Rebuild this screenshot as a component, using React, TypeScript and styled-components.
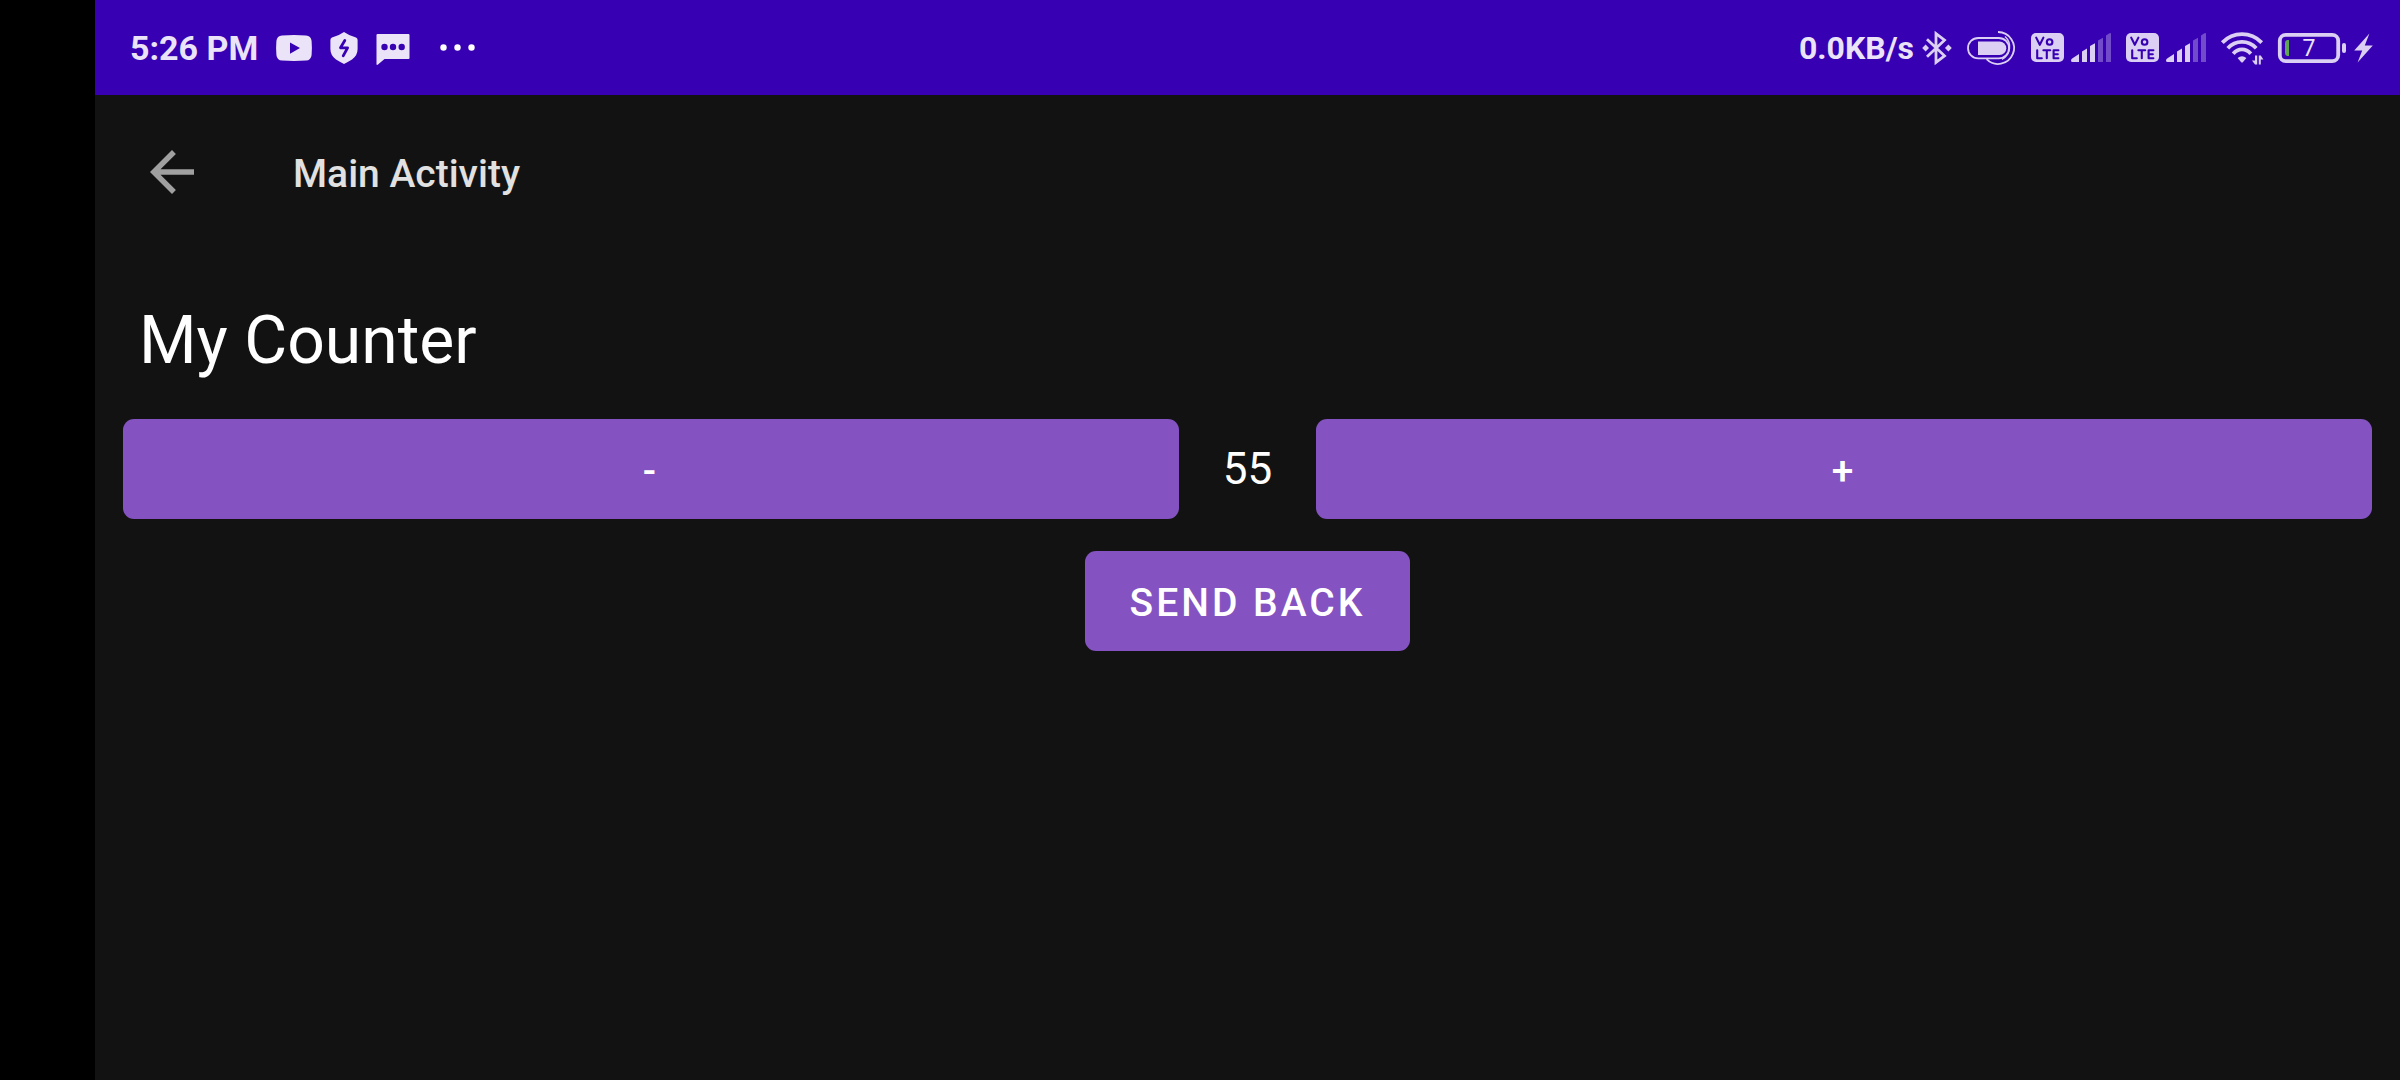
import React, { useState } from "react";
import styled, { createGlobalStyle } from "styled-components";

const GlobalStyle = createGlobalStyle`
  * { box-sizing: border-box; }
  html, body { margin: 0; }
  body {
    background: #121212;
    font-family: Roboto, "Noto Sans", sans-serif;
  }
`;

const Screen = styled.div`
  display: flex;
  min-height: 100vh;
  background: #121212;
  color: #ffffff;
`;

const CutoutStrip = styled.div`
  flex: none;
  width: 95px;
  background: #000000;
`;

const Page = styled.div`
  flex: 1;
  min-width: 0;
`;

const StatusBar = styled.header`
  display: flex;
  align-items: center;
  justify-content: space-between;
  height: 95px;
  padding: 0 27px 0 35px;
  background: #3700b3;
  color: #ebe4f9;
`;

const StatusGroup = styled.div<{ $gap: number; $soft?: boolean }>`
  display: flex;
  align-items: center;
  gap: ${(p) => p.$gap}px;
  color: ${(p) => (p.$soft ? "#dbcff3" : "#ebe4f9")};
`;

const StatusText = styled.span<{ $size: number }>`
  font-size: ${(p) => p.$size}px;
  line-height: 40px;
  font-weight: 700;
  color: #ebe4f9;
  white-space: nowrap;
`;

const Icon = styled.svg`
  display: block;
  flex: none;
  overflow: visible;
`;

const IconText = styled.text`
  font-family: Roboto, sans-serif;
  font-weight: 400;
`;

const AppBar = styled.nav`
  display: flex;
  align-items: center;
  gap: 88px;
  height: 154px;
  padding: 0 44px;
`;

const BackButton = styled.button`
  padding: 0;
  border: 0;
  background: none;
  color: #a0a0a0;
  cursor: pointer;
`;

const AppTitle = styled.h1`
  margin: 0;
  padding-top: 3px;
  font-size: 39px;
  line-height: 46px;
  font-weight: 500;
  color: #e1e1e1;
`;

const Content = styled.main`
  padding: 53px 28px 28px;
`;

const Heading = styled.h2`
  margin: 0 16px 39px;
  font-size: 66px;
  line-height: 78px;
  font-weight: 400;
`;

const CounterRow = styled.div`
  display: flex;
  align-items: center;
`;

const Button = styled.button<{ $grow?: boolean }>`
  flex: ${(p) => (p.$grow ? "1 1 0" : "none")};
  height: 100px;
  padding: 3px 45px 0;
  border: 0;
  border-radius: 11px;
  background: #8452c1;
  color: #ffffff;
  font-family: inherit;
  font-size: 39px;
  line-height: 46px;
  font-weight: 500;
  letter-spacing: 3px;
  text-transform: uppercase;
  cursor: pointer;
`;

const CountValue = styled.output`
  padding: 0 44px;
  font-size: 44px;
  line-height: 52px;
`;

const Actions = styled.div`
  display: flex;
  justify-content: center;
  padding-top: 32px;
`;

const VideoIcon = () => (
  <Icon width="36" height="26" viewBox="0 0 36 26" aria-hidden="true">
    <path
      fill="currentColor"
      fillRule="evenodd"
      d="M6 .4Q18-.4 30 .4Q35 .7 35.6 6Q36.2 13 35.6 20Q35 25.3 30 25.6Q18 26.4 6 25.6Q1 25.3.4 20Q-.2 13 .4 6Q1 .7 6 .4ZM14 7.5V18.7L24 13Z"
    />
  </Icon>
);

const ShieldIcon = () => (
  <Icon width="28" height="32" viewBox="0 0 28 32" aria-hidden="true">
    <path
      fill="currentColor"
      d="M14 0Q20 4.2 26 5.5Q27.6 6 27.6 8V17Q27.6 23.5 22 27.5Q17 30.5 14 32Q11 30.5 6 27.5Q.4 23.5.4 17V8Q.4 6 2 5.5Q8 4.2 14 0Z"
    />
    <path
      fill="none"
      stroke="#3700b3"
      strokeWidth="2.8"
      strokeLinecap="round"
      strokeLinejoin="round"
      d="M14.8 8.5L10.5 15.8H17.6L13.2 23.8"
    />
  </Icon>
);

const MessageIcon = () => (
  <Icon width="34" height="34" viewBox="0 0 34 34" aria-hidden="true">
    <path
      fill="currentColor"
      d="M1.5 3H32.5Q33.5 3 33.5 4V27Q33.5 28 32.5 28H8.5L2 33.6Q.5 34.4.5 33V4Q.5 3 1.5 3Z"
    />
    <g fill="#3700b3">
      <circle cx="8.5" cy="16" r="3.2" />
      <circle cx="17" cy="16" r="3.2" />
      <circle cx="25.7" cy="16" r="3.2" />
    </g>
  </Icon>
);

const MoreIcon = () => (
  <Icon width="48" height="8" viewBox="0 0 48 8" aria-hidden="true">
    <g fill="#ffffff">
      <circle cx="15.5" cy="3.5" r="3.2" />
      <circle cx="29.5" cy="3.5" r="3.2" />
      <circle cx="43.5" cy="3.5" r="3.2" />
    </g>
  </Icon>
);

const BluetoothIcon = () => (
  <Icon width="30" height="34" viewBox="0 0 30 34" aria-hidden="true">
    <path
      fill="none"
      stroke="#dbcff3"
      strokeWidth="2.8"
      d="M5 8.2L22.5 24.8L14 31.4V2.6L22.5 9.2L5 25.8"
    />
    <path fill="#dbcff3" d="M3.6 13.4L7 17L3.6 20.6L.2 17ZM26.4 13.4L29.8 17L26.4 20.6L23 17Z" />
  </Icon>
);

const PillIcon = () => (
  <Icon width="49" height="34" viewBox="0 0 49 34" aria-hidden="true">
    <g fill="none" stroke="currentColor" strokeWidth="1.8">
      <rect x="1" y="7" width="41" height="20.4" rx="10.2" />
      <path d="M31 1A16 16 0 1 1 19.6 28.2" />
      <path d="M38 5.5A14 14 0 0 1 35 28.4" strokeWidth="1.3" />
    </g>
    <path fill="currentColor" d="M11 10.4H32.5A6.8 6.8 0 0 1 32.5 24H11Z" />
  </Icon>
);

const VolteIcon = () => (
  <Icon width="33" height="29" viewBox="0 0 33 29" role="img" aria-label="VoLTE">
    <rect width="33" height="29" rx="5" fill="currentColor" />
    <g fill="none" stroke="#3700b3" strokeWidth="2.1" strokeLinecap="round" strokeLinejoin="round">
      <path d="M5.2 4.6L8.8 11.8L12.4 4.6" />
      <circle cx="18.6" cy="9" r="2.8" />
      <path d="M6.2 17.2V25.2H10.8M12.4 17.2H19.2M15.8 17.2V25.2M27.4 17.2H22.6V25.2H27.4M22.6 21.2H26.8" />
    </g>
  </Icon>
);

const SignalIcon = () => (
  <Icon width="40" height="29" viewBox="0 0 40 29" aria-hidden="true">
    <path
      fill="currentColor"
      d="M0 27.5Q0 26 1.5 25.2L8 21V29H1.5Q0 29 0 27.5ZM11 18.6L16 15.4V29H11ZM19 13L24 10.2V29H19Z"
    />
    <path fill="currentColor" opacity=".36" d="M27 7.6L32 4.8V29H27ZM35 2.6L38 .5Q40-.5 40 1V29H35Z" />
  </Icon>
);

const WifiIcon = () => (
  <Icon width="42" height="34" viewBox="0 0 42 34" aria-hidden="true">
    <g fill="none" stroke="currentColor" strokeWidth="3.8">
      <path d="M1.3 11.6Q9.5 3.2 21 3.2Q32.5 3.2 40.7 11.6" />
      <path d="M6.8 17.2Q12.6 10.9 21 10.9Q29.4 10.9 35.2 17.2" />
      <path d="M12.2 22.8Q16 18.4 21 18.4Q26 18.4 29.8 22.8" />
    </g>
    <path fill="currentColor" d="M16.6 27Q21 23.4 25.4 27L21.8 31.2Q21 32 20.2 31.2Z" />
    <path fill="currentColor" d="M34 24.4H36.2V33.6H34L31 29.6H34ZM37.8 24.4H39.8L42.4 28.4H39.8V33.6H37.8Z" />
  </Icon>
);

const BatteryIcon = () => (
  <Icon width="68" height="30" viewBox="0 0 68 30" role="img" aria-label="Battery">
    <rect x="1.8" y="1.8" width="58.4" height="26.4" rx="6" fill="none" stroke="currentColor" strokeWidth="3.8" />
    <rect x="64" y="10" width="4" height="10" rx="2" fill="currentColor" />
    <path fill="#5fa653" d="M9 7H11V23H9Q7 22.5 7 20V10Q7 7.5 9 7Z" />
    <IconText x="31" y="23" fontSize="23" textAnchor="middle" fill="#ebe4f9">
      7
    </IconText>
  </Icon>
);

const BoltIcon = () => (
  <Icon width="19" height="30" viewBox="0 0 19 30" aria-hidden="true">
    <path fill="currentColor" d="M15.4.4L.2 17.4H8.2L3.6 29.6L18.8 12.4H10.8Z" />
  </Icon>
);

const BackIcon = () => (
  <Icon width="66" height="66" viewBox="0 0 24 24" aria-hidden="true">
    <path fill="currentColor" d="M20 11H7.83l5.59-5.59L12 4l-8 8 8 8 1.41-1.41L7.83 13H20v-2z" />
  </Icon>
);

export default function App() {
  const [count, setCount] = useState(55);

  return (
    <>
      <GlobalStyle />
      <Screen>
        <CutoutStrip />
        <Page>
          <StatusBar>
            <StatusGroup $gap={18}>
              <StatusText $size={34}>5:26 PM</StatusText>
              <VideoIcon />
              <ShieldIcon />
              <MessageIcon />
              <MoreIcon />
            </StatusGroup>
            <StatusGroup $gap={15} $soft>
              <StatusGroup $gap={8} $soft>
                <StatusText $size={32}>0.0KB/s</StatusText>
                <BluetoothIcon />
              </StatusGroup>
              <PillIcon />
              <StatusGroup $gap={7} $soft>
                <VolteIcon />
                <SignalIcon />
              </StatusGroup>
              <StatusGroup $gap={7} $soft>
                <VolteIcon />
                <SignalIcon />
              </StatusGroup>
              <WifiIcon />
              <StatusGroup $gap={8} $soft>
                <BatteryIcon />
                <BoltIcon />
              </StatusGroup>
            </StatusGroup>
          </StatusBar>
          <AppBar>
            <BackButton type="button" aria-label="Back">
              <BackIcon />
            </BackButton>
            <AppTitle>Main Activity</AppTitle>
          </AppBar>
          <Content>
            <Heading>My Counter</Heading>
            <CounterRow>
              <Button type="button" $grow onClick={() => setCount(count - 1)}>
                -
              </Button>
              <CountValue>{count}</CountValue>
              <Button type="button" $grow onClick={() => setCount(count + 1)}>
                +
              </Button>
            </CounterRow>
            <Actions>
              <Button type="button">Send back</Button>
            </Actions>
          </Content>
        </Page>
      </Screen>
    </>
  );
}
